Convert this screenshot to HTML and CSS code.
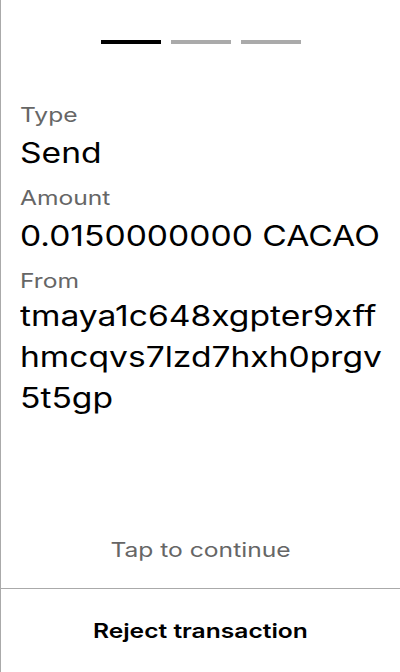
FILE: index.html
```html
<!DOCTYPE html>
<html>
<head>
<meta charset="utf-8">
<link rel="stylesheet" href="styles.css">
</head>
<body>
<div class="screen">
  <div class="steps">
    <span class="step active"></span>
    <span class="step"></span>
    <span class="step"></span>
  </div>
  <div class="details">
    <div class="label">Type</div>
    <div class="value">Send</div>
    <div class="label">Amount</div>
    <div class="value">0.0150000000 CACAO</div>
    <div class="label">From</div>
    <div class="value address">tmaya1c648xgpter9xffhmcqvs7lzd7hxh0prgv5t5gp</div>
  </div>
  <div class="tap">Tap to continue</div>
  <div class="reject"><span class="reject-text">Reject transaction</span></div>
</div>
</body>
</html>
```

FILE: styles.css
```css
html, body {
  margin: 0;
  padding: 0;
  background: #fff;
}
.screen {
  width: 400px;
  height: 672px;
  box-sizing: border-box;
  border-left: 1px solid #aaa;
  display: flex;
  flex-direction: column;
  overflow: hidden;
  font-family: Inter, "Noto Sans", sans-serif;
  color: #000;
}
.steps {
  display: flex;
  justify-content: center;
  gap: 10px;
  padding-top: 40px;
}
.step {
  width: 60px;
  height: 4px;
  background: #aaa;
}
.step.active {
  background: #000;
}
.details {
  flex: 1;
  padding: 59px 12px 0 19px;
}
.label {
  font-size: 20px;
  line-height: 24px;
  color: #666;
  margin-bottom: 6px;
  transform: scaleX(1.23);
  transform-origin: left center;
}
.value {
  font-size: 28px;
  line-height: 41px;
  margin-bottom: 12px;
  width: calc(100% / 1.2);
  transform: scaleX(1.2);
  transform-origin: left center;
}
.address {
  margin-top: -3px;
  word-break: break-all;
}
.tap {
  text-align: center;
  font-size: 20px;
  line-height: 24px;
  color: #666;
  padding-bottom: 26px;
  transform: scaleX(1.23);
}
.reject {
  border-top: 1px solid #aaa;
  height: 83px;
  display: flex;
  align-items: center;
  justify-content: center;
}
.reject-text {
  font-size: 20px;
  line-height: 24px;
  font-weight: 600;
  transform: scaleX(1.23);
}
```
